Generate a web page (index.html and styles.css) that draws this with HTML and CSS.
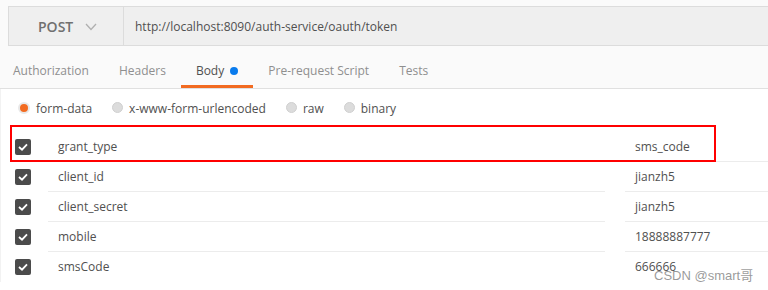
FILE: index.html
```html
<!DOCTYPE html>
<html lang="en">
<head>
    <meta charset="UTF-8">
    <title>POST token</title>
    <link rel="stylesheet" href="styles.css">
</head>
<body>

<div class="top">
    <div class="urlbar">
        <div class="method">
            <span>POST</span>
            <svg class="chevron" width="12" height="8" viewBox="0 0 12 8"><polyline points="1,1 6,6.5 11,1" fill="none" stroke="#b0b0b0" stroke-width="1.3"/></svg>
        </div>
        <div class="url">http://localhost:8090/auth-service/oauth/token</div>
    </div>
    <div class="tabs">
        <div class="tab first">Authorization</div>
        <div class="tab">Headers</div>
        <div class="tab active">Body <span class="dot"></span></div>
        <div class="tab">Pre-request Script</div>
        <div class="tab">Tests</div>
    </div>
</div>

<div class="body-pane">
    <div class="modes">
        <label class="mode"><span class="radio on"></span>form-data</label>
        <label class="mode"><span class="radio"></span>x-www-form-urlencoded</label>
        <label class="mode"><span class="radio"></span>raw</label>
        <label class="mode"><span class="radio"></span>binary</label>
    </div>

    <div class="rows">
        <div class="row">
            <div class="check"><span class="box"><svg width="10" height="8" viewBox="0 0 10 8"><polyline points="1,4 4,6.7 9,1.3" fill="none" stroke="#fff" stroke-width="1.8"/></svg></span></div>
            <div class="key">grant_type</div>
            <div class="val">sms_code</div>
        </div>
        <div class="row">
            <div class="check"><span class="box"><svg width="10" height="8" viewBox="0 0 10 8"><polyline points="1,4 4,6.7 9,1.3" fill="none" stroke="#fff" stroke-width="1.8"/></svg></span></div>
            <div class="key">client_id</div>
            <div class="val">jianzh5</div>
        </div>
        <div class="row">
            <div class="check"><span class="box"><svg width="10" height="8" viewBox="0 0 10 8"><polyline points="1,4 4,6.7 9,1.3" fill="none" stroke="#fff" stroke-width="1.8"/></svg></span></div>
            <div class="key">client_secret</div>
            <div class="val">jianzh5</div>
        </div>
        <div class="row">
            <div class="check"><span class="box"><svg width="10" height="8" viewBox="0 0 10 8"><polyline points="1,4 4,6.7 9,1.3" fill="none" stroke="#fff" stroke-width="1.8"/></svg></span></div>
            <div class="key">mobile</div>
            <div class="val">18888887777</div>
        </div>
        <div class="row last">
            <div class="check"><span class="box"><svg width="10" height="8" viewBox="0 0 10 8"><polyline points="1,4 4,6.7 9,1.3" fill="none" stroke="#fff" stroke-width="1.8"/></svg></span></div>
            <div class="key">smsCode</div>
            <div class="val">666666</div>
        </div>
    </div>
</div>

<!-- annotation box + watermark sit over the table -->
<div class="highlight"></div>
<div class="watermark">CSDN @smart哥</div>

</body>
</html>
```

FILE: styles.css
```css
body {
    margin: 0;
    font-family: 'Open Sans', sans-serif;
    font-size: 12px;
    color: #505050;
    background: #fff;
    position: relative;
    height: 290px;
    overflow: hidden;
}
.top {
    background: #fafafa;
    padding-top: 6px;
    border-bottom: 1px solid #e0e0e0;
}
.urlbar {
    margin-left: 8px;
    height: 38px;
    display: flex;
    background: #efefef;
    border: 1px solid #dcdcdc;
    border-right: none;
}
.method {
    width: 115px;
    box-sizing: border-box;
    padding-left: 29px;
    display: flex;
    align-items: center;
    border-right: 1px solid #dcdcdc;
    font-size: 14px;
    font-weight: 600;
    color: #707070;
}
.chevron {
    margin-left: 12px;
    margin-top: 1px;
}
.url {
    display: flex;
    align-items: center;
    padding-left: 11px;
    font-size: 12px;
    color: #505050;
}
.tabs {
    display: flex;
}
.tab {
    padding: 14px 15px 3px;
    line-height: 22px;
    border-bottom: 3px solid transparent;
    color: #8f8f8f;
}
.tab.first {
    padding-left: 13px;
}
.tab.active {
    color: #505050;
    border-bottom-color: #f26b21;
}
.dot {
    display: inline-block;
    width: 8px;
    height: 8px;
    border-radius: 50%;
    background: #097bed;
    margin-left: 3px;
    vertical-align: 0;
}
.body-pane {
    border-left: 1px solid #f2f2f2;
}
.modes {
    display: flex;
    padding: 11px 0 15px 17px;
    line-height: 17px;
}
.mode {
    display: flex;
    align-items: center;
    margin-right: 20px;
}
.radio {
    width: 11px;
    height: 11px;
    border-radius: 50%;
    background: #dcdcdc;
    border: 1px solid #d0d0d0;
    box-sizing: border-box;
    margin-right: 6px;
    margin-top: -2px;
}
.radio.on {
    background: #f26b21;
    border: 2px solid #e8e8e8;
    width: 12px;
    height: 12px;
}
.rows {
    display: flex;
    flex-direction: column;
}
.row {
    display: flex;
    height: 30px;
}
.check {
    width: 47px;
    padding-left: 14px;
    box-sizing: border-box;
    display: flex;
    align-items: center;
}
.box {
    width: 16px;
    height: 16px;
    border-radius: 2px;
    background: #4b4b4b;
    display: flex;
    align-items: center;
    justify-content: center;
    margin-top: -1px;
}
.key, .val {
    display: flex;
    align-items: center;
    padding-left: 10px;
    border-bottom: 1px solid #ececec;
    margin-top: 0;
}
.key {
    width: 557px;
    box-sizing: border-box;
    margin-right: 20px;
}
.val {
    flex: 1;
}
.row.last .key, .row.last .val {
    border-bottom-color: transparent;
}
.highlight {
    position: absolute;
    left: 10px;
    top: 125px;
    width: 706px;
    height: 37px;
    box-sizing: border-box;
    border: 2px solid #f00;
}
.watermark {
    position: absolute;
    left: 654px;
    top: 265px;
    font-family: 'Liberation Sans', 'Noto Sans CJK SC', sans-serif;
    font-size: 13px;
    color: rgba(120, 120, 120, 0.75);
}
```
